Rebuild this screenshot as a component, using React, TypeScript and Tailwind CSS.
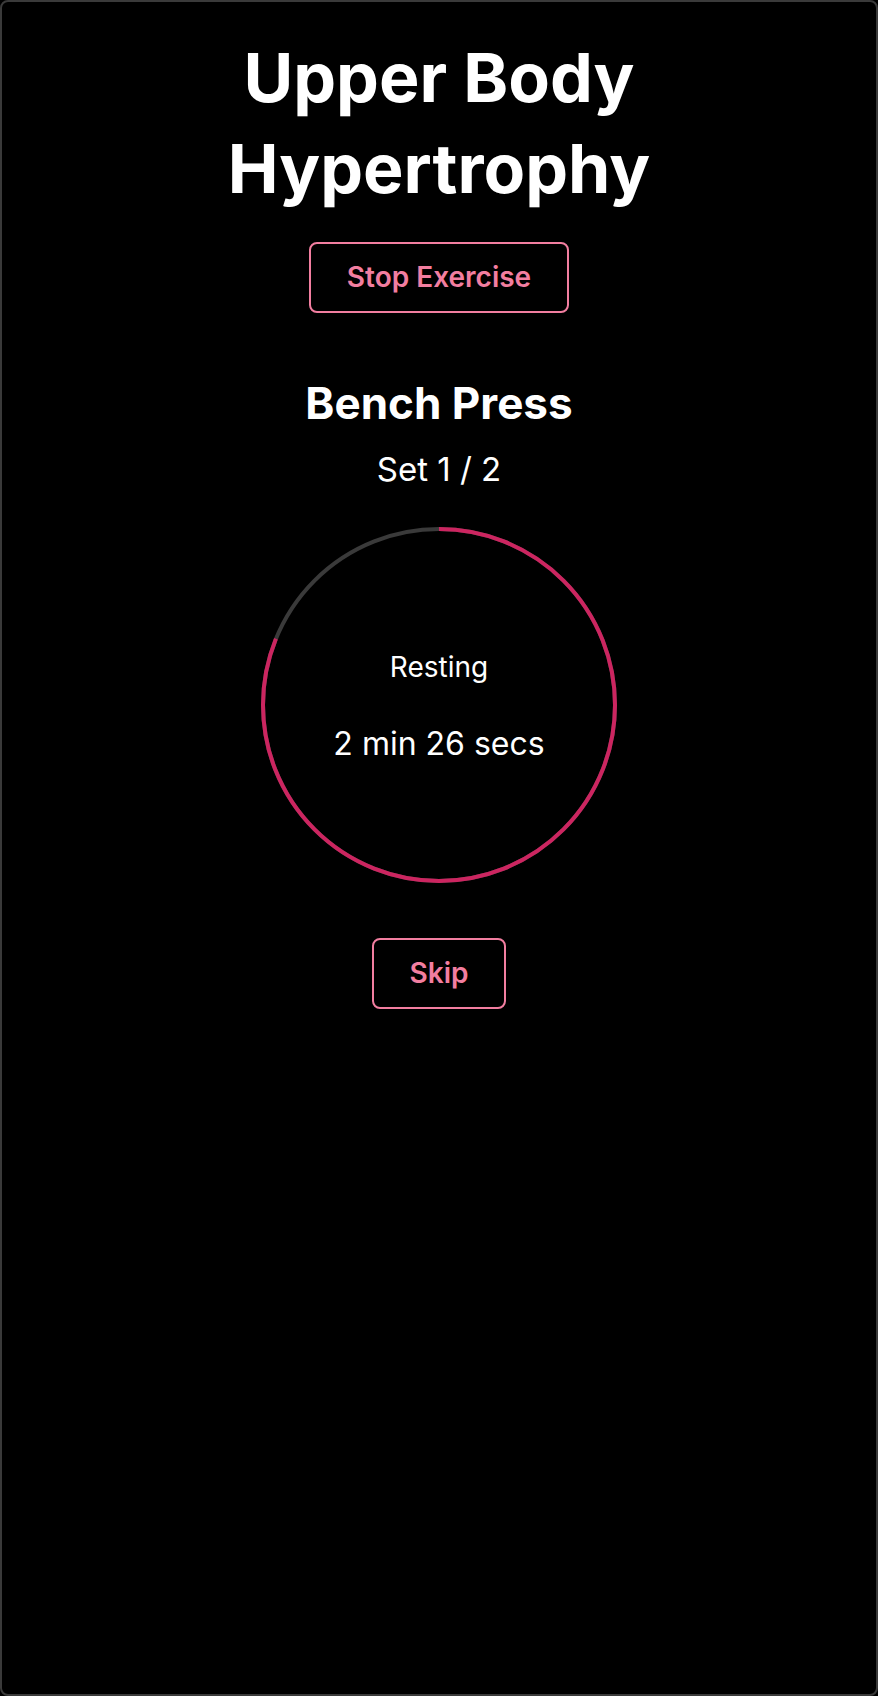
export default function App() {
  const r = 176;
  const c = 2 * Math.PI * r;
  const remaining = 146 / 180;

  return (
    <div className="bg-black" style={{ fontFamily: "Inter, 'Noto Sans', sans-serif" }}>
      <div className="h-screen rounded-[8px] border-2 border-[#3a3a3a] bg-black flex flex-col items-center pt-[30px] text-white">
        {/* workout title */}
        <h1 className="text-center text-[68px] leading-[91px] font-bold">
          Upper Body
          <br />
          Hypertrophy
        </h1>

        <button className="mt-[28px] rounded-[8px] border-2 border-[#f27ea0] px-[36px] py-[16px] text-[28px] leading-[35px] font-semibold text-[#f27ea0]">
          Stop Exercise
        </button>

        {/* current exercise */}
        <h2 className="mt-[64px] text-[44px] leading-[53px] font-bold">Bench Press</h2>
        <p className="mt-[19px] text-[33px] leading-[40px]">Set 1 / 2</p>

        {/* rest timer */}
        <div className="relative mt-[38px] h-[356px] w-[356px] flex flex-col items-center justify-center pt-[3px]">
          <svg className="absolute inset-0" width="356" height="356" viewBox="0 0 356 356">
            <circle cx="178" cy="178" r={r} fill="none" stroke="#3a3a3a" strokeWidth="4" />
            <circle
              cx="178"
              cy="178"
              r={r}
              fill="none"
              stroke="#cc2560"
              strokeWidth="4"
              strokeDasharray={`${c * remaining} ${c}`}
              transform="rotate(-90 178 178)"
            />
          </svg>
          <span className="relative text-[28px] leading-[34px]">Resting</span>
          <span className="relative mt-[40px] text-[32px] leading-[39px]">2 min 26 secs</span>
        </div>

        <button className="mt-[55px] rounded-[8px] border-2 border-[#f27ea0] px-[36px] py-[16px] text-[28px] leading-[35px] font-semibold text-[#f27ea0]">
          Skip
        </button>
      </div>
    </div>
  );
}
